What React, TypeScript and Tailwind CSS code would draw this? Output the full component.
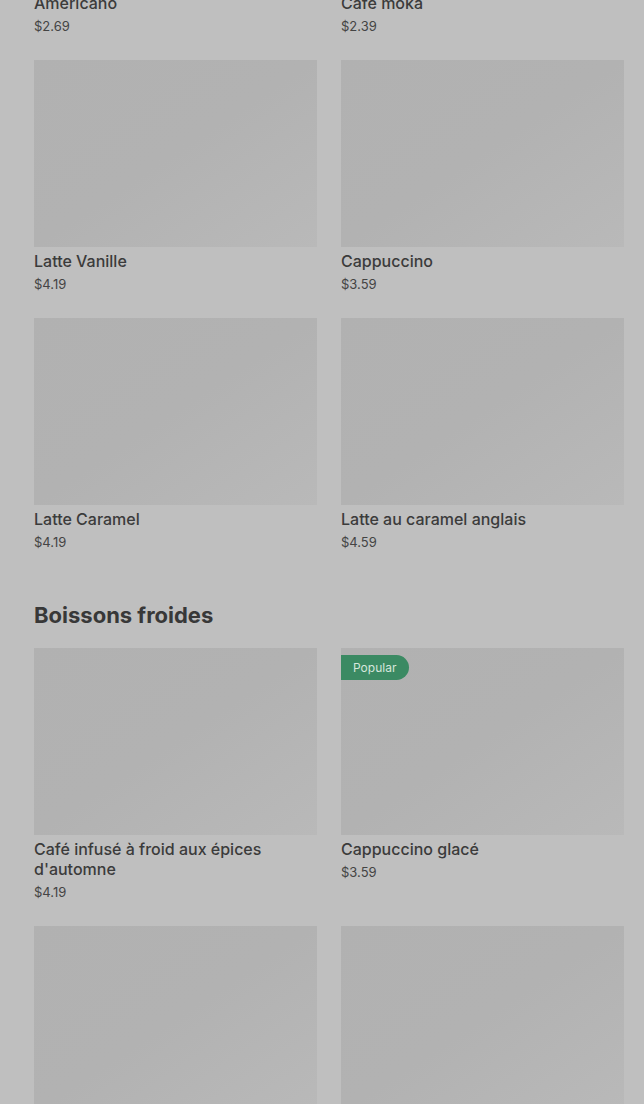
type Product = {
  name: string
  price: string
  popular?: boolean
}

const hot: Product[] = [
  { name: 'Americano', price: '$2.69' },
  { name: 'Café moka', price: '$2.39' },
  { name: 'Latte Vanille', price: '$4.19' },
  { name: 'Cappuccino', price: '$3.59' },
  { name: 'Latte Caramel', price: '$4.19' },
  { name: 'Latte au caramel anglais', price: '$4.59' },
]

const cold: Product[] = [
  { name: "Café infusé à froid aux épices d'automne", price: '$4.19' },
  { name: 'Cappuccino glacé', price: '$3.59', popular: true },
  { name: 'Latte glacé', price: '$3.99' },
  { name: 'Moka glacé', price: '$3.99' },
]

const ProductCard: React.FC<{ item: Product }> = ({ item }) => {
  return (
    <div className="flex flex-col">
      <div className="relative h-[187px] w-full bg-gradient-to-br from-[#b1b1b1] via-[#b2b2b2] to-[#b9b9b9]">
        {item.popular && (
          <span className="absolute left-0 top-[7px] flex h-[25px] items-center rounded-r-full bg-[#3b8a63] pl-3 pr-[13px] text-[12px] text-[#d6e6dc]">
            Popular
          </span>
        )}
      </div>
      <p className="mt-1 text-base font-medium leading-5 text-[#3b3b3b]">
        {item.name}
      </p>
      <p className="mt-[3px] text-[13px] leading-5 text-[#444444]">{item.price}</p>
    </div>
  )
}

const App: React.FC = () => {
  return (
    <div
      className="h-[1104px] overflow-hidden bg-[#bfbfbf] pl-[34px] pr-[20px]"
      style={{ fontFamily: 'Inter, "Noto Sans", sans-serif' }}
    >
      <div className="mt-[-198px] grid grid-cols-2 gap-x-6 gap-y-6">
        {hot.map((item) => (
          <ProductCard key={item.name} item={item} />
        ))}
      </div>
      <h2 className="mt-[48px] text-[22px] font-bold leading-[30px] text-[#383838]">
        Boissons froides
      </h2>
      <div className="mt-[18px] grid grid-cols-2 gap-x-6 gap-y-6">
        {cold.map((item) => (
          <ProductCard key={item.name} item={item} />
        ))}
      </div>
    </div>
  )
}

export default App
